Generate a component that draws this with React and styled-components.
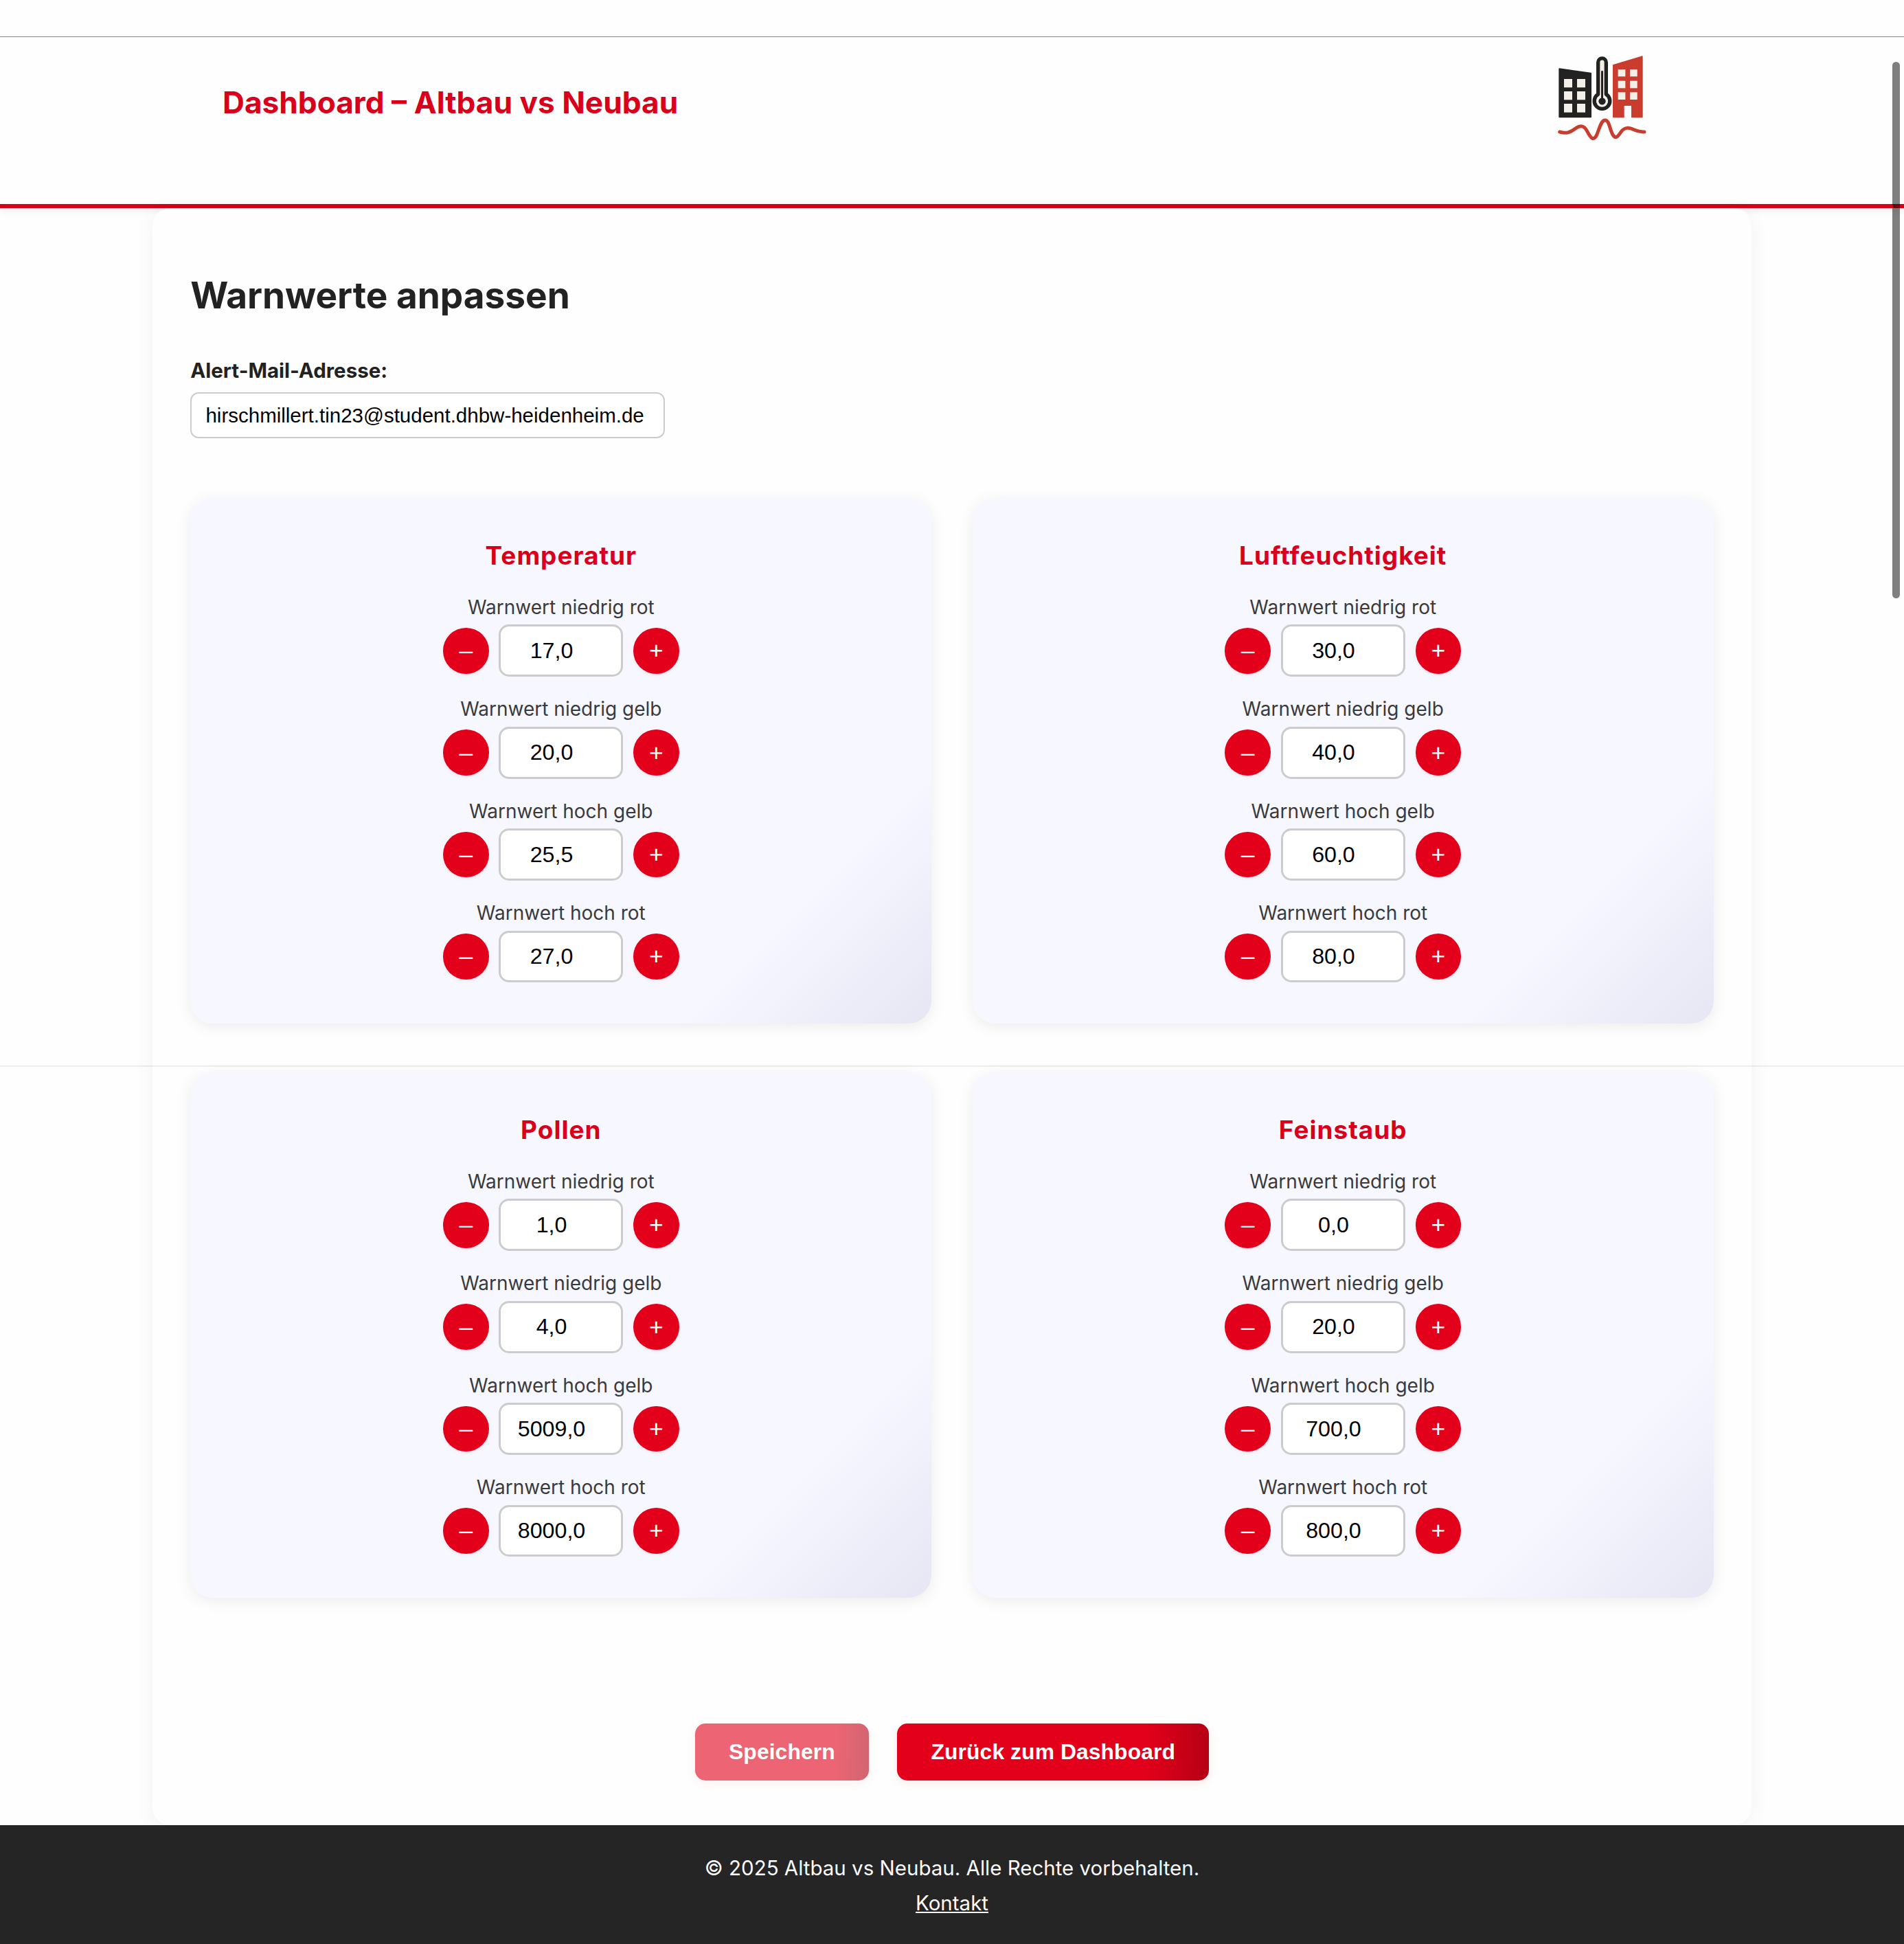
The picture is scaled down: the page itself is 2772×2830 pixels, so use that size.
import React from "react";
import styled, { createGlobalStyle } from "styled-components";

const GlobalStyle = createGlobalStyle`
  * { box-sizing: border-box; }
  body {
    margin: 0;
    background: #fefefe;
    color: #222;
    font-family: Inter, "Open Sans", sans-serif;
    overflow: hidden;
  }
`;

const Page = styled.div`
  position: relative;
  display: flex;
  flex-direction: column;
  height: 2830px;
  overflow: hidden;
`;

const TopStrip = styled.div`
  flex: none;
  height: 54px;
  border-bottom: 1px solid #8a8a8a;
`;

const Header = styled.header`
  flex: none;
  display: flex;
  justify-content: space-between;
  align-items: flex-start;
  height: 248.6px;
  padding: 6px 352px 0 324px;
  border-bottom: 6px solid #d9001b;
  box-shadow: 0 3px 11px rgba(0, 0, 0, 0.08);
`;

const SiteTitle = styled.div`
  margin-top: 62px;
  font-size: 44.2px;
  line-height: 54px;
  font-weight: 700;
  color: #d9001b;
  white-space: nowrap;
`;

const Logo = styled.svg`
  display: block;
  width: 180px;
  height: 160px;
`;

const Panel = styled.main`
  flex: none;
  display: flex;
  flex-direction: column;
  width: 2328.5px;
  height: 2354.2px;
  margin: 0 auto;
  padding: 95.4px 55.4px 0;
  border-radius: 26px;
  background: #fefefe;
  box-shadow: 0 4px 30px rgba(0, 0, 0, 0.055);
`;

const Heading = styled.h1`
  margin: 0;
  font-size: 53.1px;
  line-height: 64px;
  font-weight: 700;
`;

const MailField = styled.label`
  display: flex;
  flex-direction: column;
  align-items: flex-start;
  gap: 14px;
  margin-top: 59px;
  font-size: 29.5px;
  line-height: 36px;
  font-weight: 700;
`;

const MailInput = styled.input`
  width: 690.6px;
  height: 67.5px;
  padding: 0 20.3px;
  border: 2px solid #ccc;
  border-radius: 12px;
  background: #fff;
  color: #000;
  font: 29.5px "Liberation Sans", Arial, sans-serif;
`;

const Cards = styled.section`
  display: grid;
  grid-template-columns: 1fr 1fr;
  column-gap: 59.1px;
  row-gap: 71px;
  margin-top: 86.3px;
`;

const Card = styled.article`
  display: flex;
  flex-direction: column;
  align-items: center;
  height: 765px;
  padding-top: 58.5px;
  border-radius: 33px;
  background: linear-gradient(135deg, #f7f7ff 0%, #f6f7ff 80%, #e6e6f4 100%);
  box-shadow: 0 4px 22px rgba(0, 0, 0, 0.08);
`;

const CardTitle = styled.h2`
  margin: 0 0 31.6px;
  font-size: 36.96px;
  line-height: 52px;
  font-weight: 700;
  letter-spacing: 1px;
  color: #d9001b;
`;

const Setting = styled.div`
  display: flex;
  flex-direction: column;
  align-items: center;
  height: 148.4px;
`;

const SettingLabel = styled.div`
  margin-bottom: 8.5px;
  font-size: 28px;
  line-height: 34px;
  color: #3a3a3c;
`;

const Stepper = styled.div`
  display: flex;
  align-items: center;
  gap: 14.8px;
`;

const RoundButton = styled.button`
  width: 66.5px;
  height: 66.5px;
  padding: 0;
  border: none;
  border-radius: 50%;
  background: #e2001a;
  box-shadow: 0 2px 5px rgba(226, 0, 26, 0.08);
  color: #fff;
  font: 35.5px/66px "Liberation Sans", Arial, sans-serif;
`;

const ValueInput = styled.input`
  width: 181px;
  height: 75.8px;
  padding: 0 27.5px 0 0;
  border: 3px solid #ccc;
  border-radius: 15px;
  background: #fff;
  color: #000;
  font: 32.2px "Liberation Sans", Arial, sans-serif;
  text-align: center;
`;

const Actions = styled.div`
  display: flex;
  justify-content: center;
  gap: 41.5px;
  margin-top: 182.8px;
`;

const ActionButton = styled.button`
  height: 83.2px;
  padding: 0 49.2px;
  border: none;
  border-radius: 15px;
  background: linear-gradient(92deg, #e2001a 0%, #e2001a 80%, #b50015 100%);
  box-shadow: 0 4px 14px rgba(226, 0, 26, 0.09);
  color: #fff;
  font: 700 31.8px "Liberation Sans", Arial, sans-serif;
  letter-spacing: 0.1px;
  opacity: ${(p) => (p.disabled ? 0.6 : 1)};
`;

const Footer = styled.footer`
  position: relative;
  flex: 1;
  display: flex;
  flex-direction: column;
  align-items: center;
  padding-top: 37.6px;
  background: #252525;
  color: #fafafa;
  font-size: 29.5px;
  line-height: 50.6px;
`;

const ContactLink = styled.a`
  color: inherit;
  text-decoration: underline;
`;

const Seam = styled.div`
  position: absolute;
  top: 1551px;
  left: 0;
  right: 0;
  height: 2px;
  background: rgba(0, 0, 0, 0.065);
`;

const ScrollThumb = styled.div`
  position: absolute;
  top: 90px;
  right: 5.7px;
  width: 11px;
  height: 781px;
  border-radius: 6px;
  background: rgba(0, 0, 0, 0.5);
`;

const LABELS = [
  "Warnwert niedrig rot",
  "Warnwert niedrig gelb",
  "Warnwert hoch gelb",
  "Warnwert hoch rot",
];

const SENSORS = [
  { name: "Temperatur", values: ["17,0", "20,0", "25,5", "27,0"] },
  { name: "Luftfeuchtigkeit", values: ["30,0", "40,0", "60,0", "80,0"] },
  { name: "Pollen", values: ["1,0", "4,0", "5009,0", "8000,0"] },
  { name: "Feinstaub", values: ["0,0", "20,0", "700,0", "800,0"] },
];

function BuildingsLogo() {
  return (
    <Logo viewBox="0 0 540 480" aria-label="Altbau vs Neubau">
      <path d="M91 121 L228 140 V331 H91 Z" fill="#222" stroke="#222" strokeWidth="6" strokeLinejoin="round" />
      <g fill="#f3f0ea">
        <rect x="111" y="165" width="36" height="37" />
        <rect x="168" y="165" width="36" height="37" />
        <rect x="111" y="219" width="36" height="37" />
        <rect x="168" y="219" width="36" height="37" />
        <rect x="111" y="273" width="36" height="38" />
        <rect x="168" y="273" width="36" height="38" />
      </g>
      <path d="M327 105 L452 67 V331 H405 V281 H374 V331 H327 Z" fill="#c93c2e" stroke="#c93c2e" strokeWidth="6" strokeLinejoin="round" />
      <rect x="374" y="282" width="31" height="54" fill="#fefefe" />
      <g fill="#f3f0ea">
        <rect x="347" y="123" width="32" height="31" />
        <rect x="399" y="123" width="32" height="31" />
        <rect x="347" y="173" width="32" height="32" />
        <rect x="399" y="173" width="32" height="32" />
        <rect x="347" y="223" width="32" height="32" />
        <rect x="399" y="223" width="32" height="32" />
      </g>
      <path
        d="M260 232 V92 A17.500 17.500 0 0 1 295 92 V232 A34 34 0 1 1 260 232 Z"
        fill="#f3f0ea"
        stroke="#222"
        strokeWidth="16"
        strokeLinejoin="round"
      />
      <path d="M277.500 133 V260" stroke="#222" strokeWidth="9" strokeLinecap="round" />
      <circle cx="277.500" cy="262" r="15.500" fill="#222" />
      <path
        d="M92 396 C122 405 138 398 158 383 C182 366 198 367 211 391 C228 424 240 438 254 409 C268 374 274 345 291 345 C309 345 311 388 325 410 C338 430 348 413 360 396 C376 374 394 376 418 387 C436 396 446 395 462 396"
        fill="none"
        stroke="#c93c2e"
        strokeWidth="15"
        strokeLinecap="round"
        strokeLinejoin="round"
      />
    </Logo>
  );
}

function SensorCard({ name, values }) {
  return (
    <Card>
      <CardTitle>{name}</CardTitle>
      {values.map((value, i) => (
        <Setting key={LABELS[i]}>
          <SettingLabel>{LABELS[i]}</SettingLabel>
          <Stepper>
            <RoundButton>–</RoundButton>
            <ValueInput defaultValue={value} />
            <RoundButton>+</RoundButton>
          </Stepper>
        </Setting>
      ))}
    </Card>
  );
}

export default function App() {
  return (
    <Page>
      <GlobalStyle />
      <TopStrip />
      <Header>
        <SiteTitle>Dashboard – Altbau vs Neubau</SiteTitle>
        <BuildingsLogo />
      </Header>
      <Panel>
        <Heading>Warnwerte anpassen</Heading>
        <MailField>
          Alert-Mail-Adresse:
          <MailInput defaultValue="hirschmillert.tin23@student.dhbw-heidenheim.de" />
        </MailField>
        <Cards>
          {SENSORS.map((sensor) => (
            <SensorCard key={sensor.name} {...sensor} />
          ))}
        </Cards>
        <Actions>
          <ActionButton disabled>Speichern</ActionButton>
          <ActionButton>Zurück zum Dashboard</ActionButton>
        </Actions>
      </Panel>
      <Footer>
        <div>© 2025 Altbau vs Neubau. Alle Rechte vorbehalten.</div>
        <ContactLink>Kontakt</ContactLink>
      </Footer>
      <Seam />
      <ScrollThumb />
    </Page>
  );
}
